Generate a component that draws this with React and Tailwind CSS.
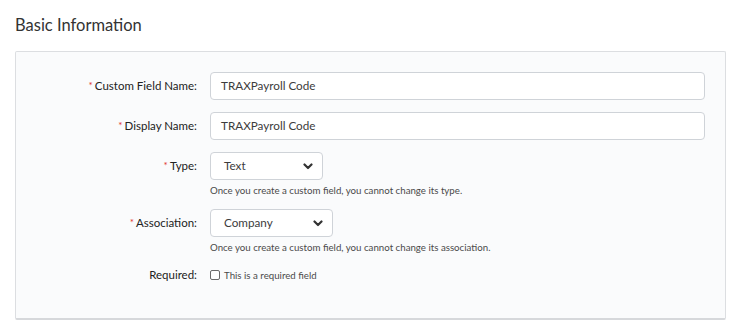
import React from 'react';

const Chevron = () => (
    <svg width="10" height="7" viewBox="0 0 10 7" className="shrink-0">
        <path d="M1.5 1.5 L5 5 L8.5 1.5" fill="none" stroke="#333" strokeWidth="2.2" strokeLinecap="round" strokeLinejoin="round" />
    </svg>
);

const Label = ({ required, children }) => (
    <div className="w-[194px] shrink-0 text-right pr-[13px] text-[11.5px] text-[#222] leading-[28px]">
        {required && <span className="text-[#e0332e] text-[10px] align-top relative top-[-1px] mr-[2px]">*</span>}
        {children}
    </div>
);

const Select = ({ value, width }) => (
    <div className={`${width} h-[28px] bg-white border border-[#cfd3d8] rounded-[4px] flex items-center justify-between pl-[13px] pr-[9px] text-[11.7px] text-[#3c3c3c]`}>
        <span>{value}</span>
        <Chevron />
    </div>
);

const Help = ({ children }) => (
    <p className="mt-[3px] text-[9.7px] leading-[14px] text-[#4a4a4a]">{children}</p>
);

const App = () => {
    return (
        <div className="w-[741px] h-[333px] bg-white font-['Lato','Noto_Sans',sans-serif] overflow-hidden">
            <h2 className="pt-[13px] pl-[15px] text-[16.5px] leading-[24px] text-[#333]">Basic Information</h2>

            <div className="mx-[15px] mt-[14px] w-[711px] h-[269px] bg-[#fafbfc] border border-[#dcdee1] border-b-2 border-b-[#d6d8db] rounded-[2px] pt-[20px] pr-[20px]">
                {/* Custom Field Name */}
                <div className="flex mb-[12px]">
                    <Label required>Custom Field Name:</Label>
                    <div className="flex-1 h-[28px] bg-white border border-[#cfd3d8] rounded-[4px] pl-[10px] flex items-center text-[11.7px] text-[#3c3c3c]">
                        TRAXPayroll Code
                    </div>
                </div>

                {/* Display Name */}
                <div className="flex mb-[12px]">
                    <Label required>Display Name:</Label>
                    <div className="flex-1 h-[28px] bg-white border border-[#cfd3d8] rounded-[4px] pl-[10px] flex items-center text-[11.7px] text-[#3c3c3c]">
                        TRAXPayroll Code
                    </div>
                </div>

                {/* Type */}
                <div className="flex mb-[12px]">
                    <Label required>Type:</Label>
                    <div>
                        <Select value="Text" width="w-[113px]" />
                        <Help>Once you create a custom field, you cannot change its type.</Help>
                    </div>
                </div>

                {/* Association */}
                <div className="flex mb-[13px]">
                    <Label required>Association:</Label>
                    <div>
                        <Select value="Company" width="w-[123px]" />
                        <Help>Once you create a custom field, you cannot change its association.</Help>
                    </div>
                </div>

                {/* Required */}
                <div className="flex items-center">
                    <div className="w-[194px] shrink-0 text-right pr-[13px] text-[11.5px] text-[#222] leading-[16px]">Required:</div>
                    <label className="flex items-center gap-[4px] text-[9.7px] text-[#4a4a4a]">
                        <span className="w-[10px] h-[10px] border border-[#6b6b6b] rounded-[2px] bg-white" />
                        This is a required field
                    </label>
                </div>
            </div>
        </div>
    );
};

export default App;
